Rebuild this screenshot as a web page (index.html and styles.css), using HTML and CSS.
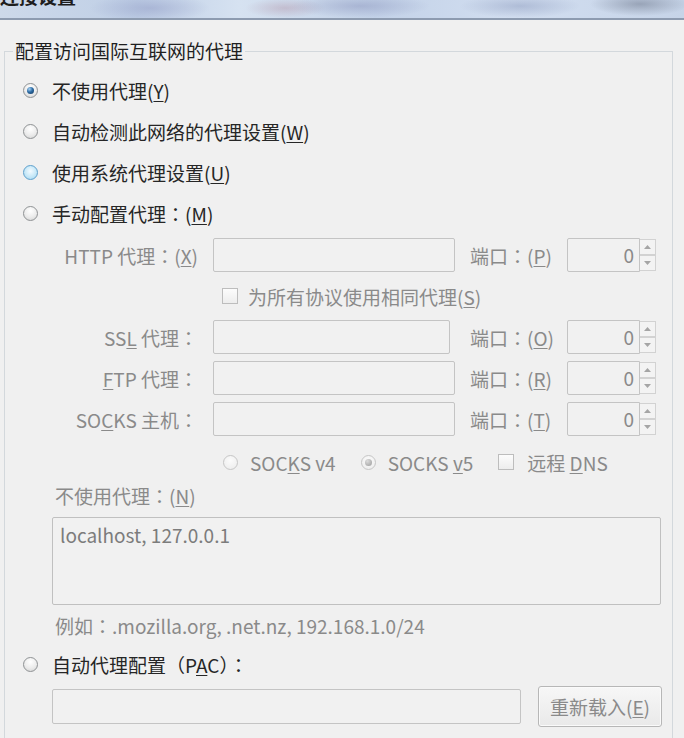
FILE: index.html
```html
<!DOCTYPE html>
<html lang="zh-CN">
<head>
<meta charset="utf-8">
<title>连接设置</title>
<link rel="stylesheet" href="styles.css">
</head>
<body>
<div class="titlebar"><span class="title">连接设置</span></div>
<div class="dialog">
  <fieldset class="group">
    <legend>配置访问国际互联网的代理</legend>
    <div class="opt"><span class="radio checked"></span><span>不使用代理(<u>Y</u>)</span></div>
    <div class="opt"><span class="radio"></span><span>自动检测此网络的代理设置(<u>W</u>)</span></div>
    <div class="opt"><span class="radio hover"></span><span>使用系统代理设置(<u>U</u>)</span></div>
    <div class="opt"><span class="radio"></span><span>手动配置代理<span class="c" lang="zh-TW">：</span>(<u>M</u>)</span></div>

    <div class="manual">
      <span class="lbl">HTTP 代理<span class="c" lang="zh-TW">：</span>(<u>X</u>)</span>
      <span class="field"></span>
      <span class="port">端口<span class="c" lang="zh-TW">：</span>(<u>P</u>)</span>
      <span class="spin"><span class="num">0</span><span class="arrows"><span><svg width="7" height="4" viewBox="0 0 7 4"><path d="M0 4 L3.5 0 L7 4Z" fill="#a5a5a5"/></svg></span><span><svg width="7" height="4" viewBox="0 0 7 4"><path d="M0 0 L3.5 4 L7 0Z" fill="#a5a5a5"/></svg></span></span></span>

      <span class="checkrow"><span class="check"></span><span>为所有协议使用相同代理(<u>S</u>)</span></span>

      <span class="lbl">SS<u>L</u> 代理<span class="c" lang="zh-TW">：</span></span>
      <span class="field short"></span>
      <span class="port">端口<span class="c" lang="zh-TW">：</span>(<u>O</u>)</span>
      <span class="spin"><span class="num">0</span><span class="arrows"><span><svg width="7" height="4" viewBox="0 0 7 4"><path d="M0 4 L3.5 0 L7 4Z" fill="#a5a5a5"/></svg></span><span><svg width="7" height="4" viewBox="0 0 7 4"><path d="M0 0 L3.5 4 L7 0Z" fill="#a5a5a5"/></svg></span></span></span>

      <span class="lbl"><u>F</u>TP 代理<span class="c" lang="zh-TW">：</span></span>
      <span class="field"></span>
      <span class="port">端口<span class="c" lang="zh-TW">：</span>(<u>R</u>)</span>
      <span class="spin"><span class="num">0</span><span class="arrows"><span><svg width="7" height="4" viewBox="0 0 7 4"><path d="M0 4 L3.5 0 L7 4Z" fill="#a5a5a5"/></svg></span><span><svg width="7" height="4" viewBox="0 0 7 4"><path d="M0 0 L3.5 4 L7 0Z" fill="#a5a5a5"/></svg></span></span></span>

      <span class="lbl">SO<u>C</u>KS 主机<span class="c" lang="zh-TW">：</span></span>
      <span class="field"></span>
      <span class="port">端口<span class="c" lang="zh-TW">：</span>(<u>T</u>)</span>
      <span class="spin"><span class="num">0</span><span class="arrows"><span><svg width="7" height="4" viewBox="0 0 7 4"><path d="M0 4 L3.5 0 L7 4Z" fill="#a5a5a5"/></svg></span><span><svg width="7" height="4" viewBox="0 0 7 4"><path d="M0 0 L3.5 4 L7 0Z" fill="#a5a5a5"/></svg></span></span></span>
    </div>

    <div class="socksver">
      <span class="item"><span class="radio dis"></span><span>SOC<u>K</u>S v4</span></span>
      <span class="item"><span class="radio dis checked"></span><span>SOCKS <u>v</u>5</span></span>
      <span class="item"><span class="check dis"></span><span>远程 <u>D</u>NS</span></span>
    </div>

    <div class="note">不使用代理<span class="c" lang="zh-TW">：</span>(<u>N</u>)</div>
    <div class="textarea">localhost, 127.0.0.1</div>
    <div class="note example">例如<span class="c" lang="zh-TW">：</span>.mozilla.org, .net.nz, 192.168.1.0/24</div>

    <div class="opt pac"><span class="radio"></span><span>自动代理配置<span class="c" lang="zh-TW">（</span>P<u>A</u>C<span class="c" lang="zh-TW">）：</span></span></div>
    <div class="pacrow">
      <span class="field pacinput"></span>
      <span class="btn">重新载入(<u>E</u>)</span>
    </div>
  </fieldset>
</div>
</body>
</html>
```

FILE: styles.css
```css
* { box-sizing: border-box; }

body {
  margin: 0;
  width: 684px;
  height: 738px;
  overflow: hidden;
  background: #f0f0f0;
  font-family: "Noto Sans CJK SC", "Noto Sans", sans-serif;
  font-size: 19px;
  color: #262626;
}

u { text-decoration: underline; text-underline-offset: 2px; }

.c { font-family: "Noto Sans CJK TC", "Noto Sans CJK SC", sans-serif; }

.titlebar {
  height: 20px;
  overflow: hidden;
  background:
    radial-gradient(ellipse 60px 14px at 150px 8px, rgba(150,160,200,0.55), transparent),
    radial-gradient(ellipse 70px 12px at 360px 6px, rgba(140,150,190,0.5), transparent),
    radial-gradient(ellipse 40px 10px at 285px 8px, rgba(170,130,150,0.35), transparent),
    radial-gradient(ellipse 60px 12px at 520px 6px, rgba(140,155,190,0.5), transparent),
    radial-gradient(ellipse 50px 12px at 640px 4px, rgba(120,130,150,0.6), transparent),
    linear-gradient(90deg, #cdd9ea 0%, #bfcfe6 20%, #d6e2f1 35%, #c3d2e8 55%, #d2def0 75%, #c6d4e8 100%);
  border-bottom: 2px solid #8d9bb0;
}

.title {
  display: block;
  margin-top: -15px;
  line-height: 22px;
  font-weight: bold;
  color: #1d1d1d;
}

.dialog {
  padding: 18px 11px 0 4px;
}

.group {
  margin: 0;
  padding: 6px 0 0 0;
  min-width: 0;
  border: 1px solid #d3d8dc;
  border-bottom: none;
  height: 720px;
}

.group legend {
  margin-left: 8px;
  padding: 0 2px;
  line-height: 26px;
  color: #1f1f1f;
}

.opt {
  height: 41px;
  display: flex;
  align-items: center;
  gap: 14px;
  padding-left: 18px;
  color: #262626;
}

.radio {
  flex: none;
  width: 15px;
  height: 15px;
  border-radius: 50%;
  border: 1px solid #8f9294;
  background: radial-gradient(circle at 50% 30%, #ffffff 0%, #ececec 55%, #d2d2d2 100%);
  display: flex;
  align-items: center;
  justify-content: center;
}

.radio.checked::after {
  content: "";
  width: 7px;
  height: 7px;
  border-radius: 50%;
  background: radial-gradient(circle at 35% 30%, #a9d4f5 0%, #2d6ca5 45%, #0f3357 100%);
}

.radio.hover {
  border-color: #5ea0cc;
  background: radial-gradient(circle at 50% 40%, #f4fbff 0%, #c6e8f8 55%, #a3d4ee 100%);
}

.radio.dis {
  border-color: #c6c6c6;
  background: radial-gradient(circle at 50% 35%, #fbfbfb, #ebebeb);
}

.radio.dis.checked::after {
  background: radial-gradient(circle at 35% 30%, #dcdcdc, #9b9b9b);
}

.manual {
  display: grid;
  grid-template-columns: 153px 242px 82px 89px;
  grid-auto-rows: 34px;
  column-gap: 15px;
  row-gap: 7px;
  align-items: center;
  margin: 4px 0 0 40px;
  color: #8a8a8a;
}

.lbl {
  text-align: right;
  white-space: nowrap;
}

.port { white-space: nowrap; }

.field {
  display: block;
  height: 34px;
  border: 1px solid #c4c4c4;
  border-radius: 2px;
  background: #f1f1f1;
}

.field.short { width: 237px; }

.spin {
  display: flex;
  height: 34px;
}

.spin .num {
  width: 73px;
  border: 1px solid #c4c4c4;
  border-radius: 2px 0 0 2px;
  text-align: right;
  padding-right: 5px;
  line-height: 32px;
  background: #f1f1f1;
  color: #8a8a8a;
}

.spin .arrows {
  width: 16px;
  display: flex;
  flex-direction: column;
  padding: 1px 0;
}

.spin .arrows span {
  flex: 1;
  border: 1px solid #d2d2d2;
  border-left: none;
  display: flex;
  align-items: center;
  justify-content: center;
  background: #f3f3f3;
}

.checkrow {
  grid-column: 2 / 5;
  display: flex;
  align-items: center;
  gap: 10px;
  padding-left: 9px;
}

.check {
  flex: none;
  width: 16px;
  height: 16px;
  border: 1px solid #a9a9a9;
  background: linear-gradient(#fdfdfd, #e7e7e7);
}

.check.dis,
.checkrow .check {
  border-color: #bdbdbd;
  background: linear-gradient(#fcfcfc, #ededed);
}

.socksver {
  display: flex;
  align-items: center;
  gap: 25px;
  height: 34px;
  margin-top: 9px;
  padding-left: 218px;
  color: #8a8a8a;
}

.socksver .item {
  display: flex;
  align-items: center;
  gap: 12px;
  white-space: nowrap;
}

.socksver .item:last-child { gap: 13px; }

.note {
  margin-top: 4px;
  padding-left: 50px;
  line-height: 26px;
  color: #8a8a8a;
}

.textarea {
  margin: 8px 0 0 47px;
  width: 609px;
  height: 88px;
  border: 1px solid #c0c0c0;
  border-radius: 2px;
  padding: 4px 7px;
  line-height: 26px;
  color: #7c7c7c;
  background: #f1f1f1;
}

.note.example { margin-top: 8px; }

.opt.pac { margin-top: 5px; height: 40px; }

.pacrow {
  display: flex;
  align-items: center;
  gap: 17px;
  height: 41px;
  margin: 2px 0 0 47px;
}

.pacinput {
  width: 469px;
  height: 35px;
}

.btn {
  width: 124px;
  height: 41px;
  border: 1px solid #b7b7b7;
  border-radius: 3px;
  background: linear-gradient(#f7f7f7, #e9e9e9);
  box-shadow: inset 0 0 0 1px #fafafa;
  display: flex;
  align-items: center;
  justify-content: center;
  color: #8a8a8a;
}
```
